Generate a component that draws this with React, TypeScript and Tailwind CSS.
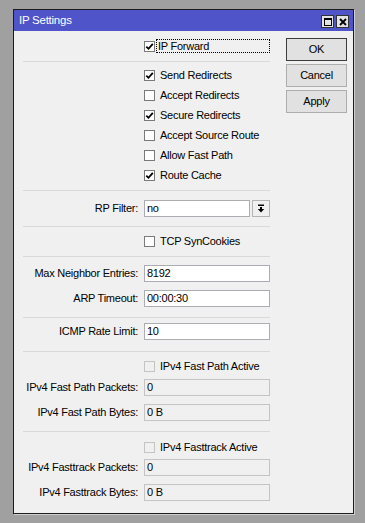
import React from "react";

const font = "font-['Liberation_Sans',Arial,sans-serif] text-[11px] tracking-[-0.25px] text-black";

function Box({ checked, disabled }: { checked?: boolean; disabled?: boolean }) {
  return (
    <div
      className={
        "flex h-[11px] w-[11px] shrink-0 items-center justify-center border " +
        (disabled ? "border-[#c4c4c4] bg-[#f0f0f0]" : "border-[#7a7a7a] bg-white")
      }
    >
      {checked && (
        <svg width="9" height="9" viewBox="0 0 9 9">
          <path d="M1.3 4.6 L3.5 6.8 L7.8 1.8" fill="none" stroke="#000" strokeWidth="1.8" />
        </svg>
      )}
    </div>
  );
}

function CheckRow({
  label,
  checked,
  disabled,
  className = "",
}: {
  label: string;
  checked?: boolean;
  disabled?: boolean;
  className?: string;
}) {
  return (
    <div className={"flex h-[20px] items-center pl-[121px] " + className}>
      <Box checked={checked} disabled={disabled} />
      <span className="ml-[5px] whitespace-nowrap">{label}</span>
    </div>
  );
}

function Field({
  label,
  value,
  readOnly,
  className = "",
}: {
  label: string;
  value: string;
  readOnly?: boolean;
  className?: string;
}) {
  return (
    <div className={"flex h-[17px] items-center " + className}>
      <div className="w-[115px] whitespace-nowrap text-right">{label}</div>
      <div
        className={
          "ml-[6px] flex h-[17px] w-[126px] items-center border pl-[2px] " +
          (readOnly ? "border-[#c4c4c4] bg-[#f0f0f0]" : "border-[#abadb3] bg-white")
        }
      >
        {value}
      </div>
    </div>
  );
}

function Sep({ className }: { className: string }) {
  return <div className={"h-px bg-[#d9d9d9] " + className} />;
}

export default function App() {
  return (
    <div className={"min-h-[523px] bg-[#a0a0a0] pl-[13px] pt-[9px] " + font}>
      <div className="w-[341px] border border-[#1c1c1c] shadow-[1px_1px_0_#cfcfcf]">

        {/* title bar */}
        <div className="flex h-[21px] items-start bg-[#4f55c9] pl-[5px] pr-[4px]">
          <span className="mt-[5px] text-[11.5px] leading-none text-white">IP Settings</span>
          <div className="ml-auto mt-[5px] flex gap-[2px]">
            <div className="flex h-[13px] w-[13px] items-center justify-center border border-[#333] bg-[#e3e3e3]">
              <div className="h-[8px] w-[8px] border border-black border-t-2" />
            </div>
            <div className="flex h-[13px] w-[13px] items-center justify-center border border-[#333] bg-[#e3e3e3]">
              <svg width="8" height="8" viewBox="0 0 8 8">
                <path d="M1 1 L7 7 M7 1 L1 7" stroke="#000" strokeWidth="1.8" />
              </svg>
            </div>
          </div>
        </div>

        {/* body */}
        <div className="flex h-[482px] bg-[#f0f0f0] pl-[9px] pt-[5px]">

          <div className="flex w-[247px] flex-col">

            <div className="flex h-[20px] items-center pl-[121px]">
              <Box checked />
              <div className="ml-px flex h-[14px] flex-1 items-center border border-dotted border-black pl-px">
                IP Forward
              </div>
            </div>

            <Sep className="mb-[3px] mt-[5px]" />

            <CheckRow label="Send Redirects" checked />
            <CheckRow label="Accept Redirects" />
            <CheckRow label="Secure Redirects" checked />
            <CheckRow label="Accept Source Route" />
            <CheckRow label="Allow Fast Path" />
            <CheckRow label="Route Cache" checked />

            <Sep className="mb-[9px] mt-[5px]" />

            <div className="flex h-[17px] items-center">
              <div className="w-[115px] text-right">RP Filter:</div>
              <div className="ml-[6px] flex h-[17px] w-[106px] items-center border border-[#abadb3] bg-white pl-[2px]">
                no
              </div>
              <div className="ml-[2px] flex h-[17px] w-[18px] items-center justify-center border border-[#b4b4b4] bg-[#f0f0f0]">
                <svg width="8" height="9" viewBox="0 0 8 9">
                  <rect x="1" y="0.5" width="6" height="1.5" fill="#000" />
                  <rect x="3" y="3" width="2" height="2.5" fill="#000" />
                  <path d="M0.8 5 L7.2 5 L4 8.5 Z" fill="#000" />
                </svg>
              </div>
            </div>

            <Sep className="mb-[4px] mt-[9px]" />

            <CheckRow label="TCP SynCookies" />

            <Sep className="mb-[8px] mt-[5px]" />

            <Field label="Max Neighbor Entries:" value="8192" />
            <Field label="ARP Timeout:" value="00:00:30" className="mt-[8px]" />

            <Sep className="mb-[5px] mt-[10px]" />

            <Field label="ICMP Rate Limit:" value="10" />

            <Sep className="mb-[4px] mt-[11px]" />

            <CheckRow label="IPv4 Fast Path Active" disabled />
            <Field label="IPv4 Fast Path Packets:" value="0" readOnly className="mt-[3px]" />
            <Field label="IPv4 Fast Path Bytes:" value="0 B" readOnly className="mt-[8px]" />

            <Sep className="mb-[5px] mt-[10px]" />

            <CheckRow label="IPv4 Fasttrack Active" disabled />
            <Field label="IPv4 Fasttrack Packets:" value="0" readOnly className="mt-[2px]" />
            <Field label="IPv4 Fasttrack Bytes:" value="0 B" readOnly className="mt-[8px]" />

          </div>

          <div className="ml-[16px] mt-[2px] flex flex-col gap-[3px]">
            <button className="flex h-[23px] w-[61px] items-center justify-center border border-[#3c3c3c] bg-[#e1e1e1]">
              OK
            </button>
            <button className="flex h-[23px] w-[61px] items-center justify-center border border-[#adadad] bg-[#e1e1e1]">
              Cancel
            </button>
            <button className="flex h-[23px] w-[61px] items-center justify-center border border-[#adadad] bg-[#e1e1e1]">
              Apply
            </button>
          </div>

        </div>
      </div>
    </div>
  );
}
